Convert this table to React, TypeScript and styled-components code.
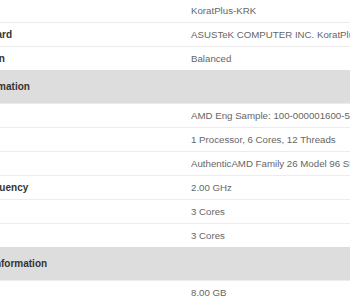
import styled, { createGlobalStyle } from 'styled-components'

const GlobalStyle = createGlobalStyle`
  html, body {
    margin : 0;
    padding : 0;
    background : #ffffff;
    overflow : hidden;
  }
  body {
    font-family : "Liberation Sans", Arial, sans-serif;
  }
`;

const Page = styled.div`
  width : 760px;
  margin : -1px 0 0 -57px;
`;

const SpecTable = styled.table`
  width : 100%;
  border-collapse : collapse;
  table-layout : fixed;
`;

const HeaderCell = styled.th`
  height : 33px;
  padding : 0 8px;
  background : #dddddd;
  color : #333333;
  font-size : 10px;
  font-weight : bold;
  text-align : left;
  white-space : nowrap;
`;

const Row = styled.tr`
  border-top : 1px solid #ececec;
  &:first-child {
    border-top : none;
  }
`;

const Label = styled.td`
  width : 224px;
  height : 23px;
  padding : 0 8px;
  color : #333333;
  font-size : 10px;
  font-weight : bold;
  white-space : nowrap;
`;

const Value = styled.td`
  padding : 0 8px;
  color : #666666;
  font-size : 9.7px;
  white-space : nowrap;
`;

interface Section {
  title: string,
  rows: [string, string][],
}

const sections: Section[] = [
  {
    title: "",
    rows: [
      ["Model", "KoratPlus-KRK"],
      ["Motherboard", "ASUSTeK COMPUTER INC. KoratPlus_KRK"],
      ["Power Plan", "Balanced"],
    ],
  },
  {
    title: "CPU Information",
    rows: [
      ["Name", "AMD Eng Sample: 100-000001600-50_Y"],
      ["Topology", "1 Processor, 6 Cores, 12 Threads"],
      ["Identifier", "AuthenticAMD Family 26 Model 96 Stepping 0"],
      ["Base Frequency", "2.00 GHz"],
      ["Cluster 1", "3 Cores"],
      ["Cluster 2", "3 Cores"],
    ],
  },
  {
    title: "Memory Information",
    rows: [
      ["Size", "8.00 GB"],
    ],
  },
];

export default function App() {
  return (
    <Page>
      <GlobalStyle />
      <SpecTable>
        {sections.map((section, i) => (
          <tbody key={i}>
            {section.title && (
              <tr>
                <HeaderCell colSpan={2}>{section.title}</HeaderCell>
              </tr>
            )}
            {section.rows.map(([label, value]) => (
              <Row key={label}>
                <Label>{label}</Label>
                <Value>{value}</Value>
              </Row>
            ))}
          </tbody>
        ))}
      </SpecTable>
    </Page>
  )
}
